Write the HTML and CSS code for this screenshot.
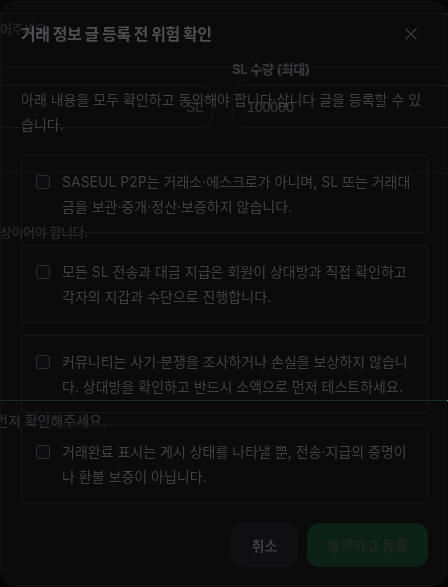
FILE: index.html
```html
<!DOCTYPE html>
<html lang="ko">
<head>
<meta charset="utf-8">
<title>거래 정보 글 등록 전 위험 확인</title>
<link rel="stylesheet" href="styles.css">
</head>
<body>
<div class="page">
  <div class="page-top"></div>
  <p class="page-hint">어주세요</p>
  <div class="page-form">
    <div class="field">
      <span class="field-label">&nbsp;</span>
      <div class="field-input field-input--suffix"><span class="suffix">SL</span></div>
    </div>
    <div class="field">
      <span class="field-label">SL 수량 (최대)</span>
      <div class="field-input"><span class="value">100000</span></div>
    </div>
  </div>
  <div class="page-divider"></div>
  <p class="page-help">상이어야 합니다.</p>
  <p class="page-notice">먼저 확인해주세요.</p>
</div>

<div class="modal" role="dialog" aria-modal="true">
  <header class="modal-head">
    <h2 class="modal-title">거래 정보 글 등록 전 위험 확인</h2>
    <button class="close" type="button" aria-label="닫기">
      <svg width="12" height="12" viewBox="0 0 12 12"><path d="M1 1L11 11M11 1L1 11" stroke="currentColor" stroke-width="1.4" stroke-linecap="round"/></svg>
    </button>
  </header>
  <div class="modal-body">
    <p class="modal-desc">아래 내용을 모두 확인하고 동의해야 팝니다·삽니다 글을 등록할 수 있습니다.</p>
    <ul class="checks">
      <li class="check"><span class="box"></span><span class="check-text">SASEUL P2P는 거래소·에스크로가 아니며, SL 또는 거래대금을 보관·중개·정산·보증하지 않습니다.</span></li>
      <li class="check"><span class="box"></span><span class="check-text">모든 SL 전송과 대금 지급은 회원이 상대방과 직접 확인하고 각자의 지갑과 수단으로 진행합니다.</span></li>
      <li class="check"><span class="box"></span><span class="check-text">커뮤니티는 사기·분쟁을 조사하거나 손실을 보상하지 않습니다. 상대방을 확인하고 반드시 소액으로 먼저 테스트하세요.</span></li>
      <li class="check"><span class="box"></span><span class="check-text">거래완료 표시는 게시 상태를 나타낼 뿐, 전송·지급의 증명이나 환불 보증이 아닙니다.</span></li>
    </ul>
  </div>
  <footer class="modal-foot">
    <button class="btn btn-cancel" type="button">취소</button>
    <button class="btn btn-primary" type="button">동의하고 등록</button>
  </footer>
</div>
</body>
</html>
```
FILE: styles.css
```css
* { box-sizing: border-box; }
html, body { margin: 0; padding: 0; }
body {
  background: #050506;
  width: 448px;
  height: 587px;
  overflow: hidden;
  font-family: Inter, "Noto Sans CJK KR", sans-serif;
}

/* background page (dimmed by the dialog) */
.page { width: 520px; }
.page-top { height: 13px; border-bottom: 1px solid #2e2e34; box-sizing: content-box; }
.page-hint { margin: 8px 0 0; font-size: 13px; line-height: 14px; color: #a2a2a6; letter-spacing: -0.4px; }
.page-form {
  margin: 24px 0 0 -24px;
  display: grid;
  grid-template-columns: 237px 1fr;
  column-gap: 19px;
}
.field { display: flex; flex-direction: column; }
.field-label { font-size: 13px; line-height: 18px; font-weight: 700; color: #f0f0f2; letter-spacing: -0.2px; }
.field-input {
  margin-top: 7px;
  height: 43px;
  border: 1px solid #3a3a42;
  border-radius: 12px;
  display: flex;
  align-items: center;
  padding: 0 14px;
  font-family: "Liberation Sans", "Noto Sans CJK KR", sans-serif;
  font-size: 14px;
}
.field-input--suffix { justify-content: flex-end; padding-right: 9px; }
.suffix { color: #c4c4c8; }
.value { color: #e0e0e2; }
.page-divider { margin-top: 45px; border-top: 1px solid #28282e; }
.page-help { margin: 49px 0 0; font-size: 13px; line-height: 18px; color: #b0b0b4; letter-spacing: -0.4px; }
.page-notice {
  margin: 159px 0 0 -5px;
  border-top: 1px solid #36c45a;
  padding-top: 10px;
  font-size: 14px;
  line-height: 20px;
  color: #c8c8cc;
}

/* dialog */
.modal {
  position: fixed;
  top: 1px;
  left: 0;
  width: 447px;
  height: 585px;
  border: 1px solid #141417;
  border-radius: 16px;
  background: rgba(12, 12, 14, 0.8);
  display: flex;
  flex-direction: column;
}
.modal-head {
  display: flex;
  align-items: center;
  justify-content: space-between;
  padding: 18px 21px 19px 20px;
  border-bottom: 1px solid #141417;
}
.modal-title {
  margin: 0;
  font-size: 16px;
  line-height: 28px;
  font-weight: 700;
  color: #4e4e51;
  letter-spacing: -0.5px;
}
.close {
  width: 28px;
  height: 28px;
  border: 0;
  padding: 0;
  background: none;
  color: #38383b;
  display: flex;
  align-items: center;
  justify-content: center;
}
.modal-body { padding: 19px 18px 0 20px; }
.modal-desc {
  margin: 0;
  padding-right: 4px;
  font-size: 14px;
  line-height: 25px;
  color: #404043;
}
.checks {
  list-style: none;
  margin: 18px 0 0;
  padding: 0;
  display: flex;
  flex-direction: column;
  gap: 12px;
}
.check {
  display: flex;
  gap: 12px;
  padding: 13px 15px 13px 14px;
  border: 1px solid #17171a;
  border-radius: 4px;
}
.box {
  flex: none;
  width: 14px;
  height: 14px;
  margin-top: 5.5px;
  border: 1px solid #2c2c30;
  border-radius: 3px;
  background: #0d0d0f;
}
.check-text {
  font-size: 14px;
  line-height: 25px;
  color: #404043;
}
.modal-foot {
  margin-top: auto;
  padding: 0 18px 18px;
  display: flex;
  justify-content: flex-end;
  gap: 9px;
}
.btn {
  height: 44px;
  border-radius: 12px;
  font-family: inherit;
  font-size: 14px;
  font-weight: 700;
  padding: 0;
}
.btn-cancel {
  width: 67px;
  background: #0f0f11;
  border: 1px solid #121215;
  color: #3d3d40;
}
.btn-primary {
  width: 121px;
  background: #0c2115;
  border: 1px solid #0d2216;
  color: #1f2622;
}
```
